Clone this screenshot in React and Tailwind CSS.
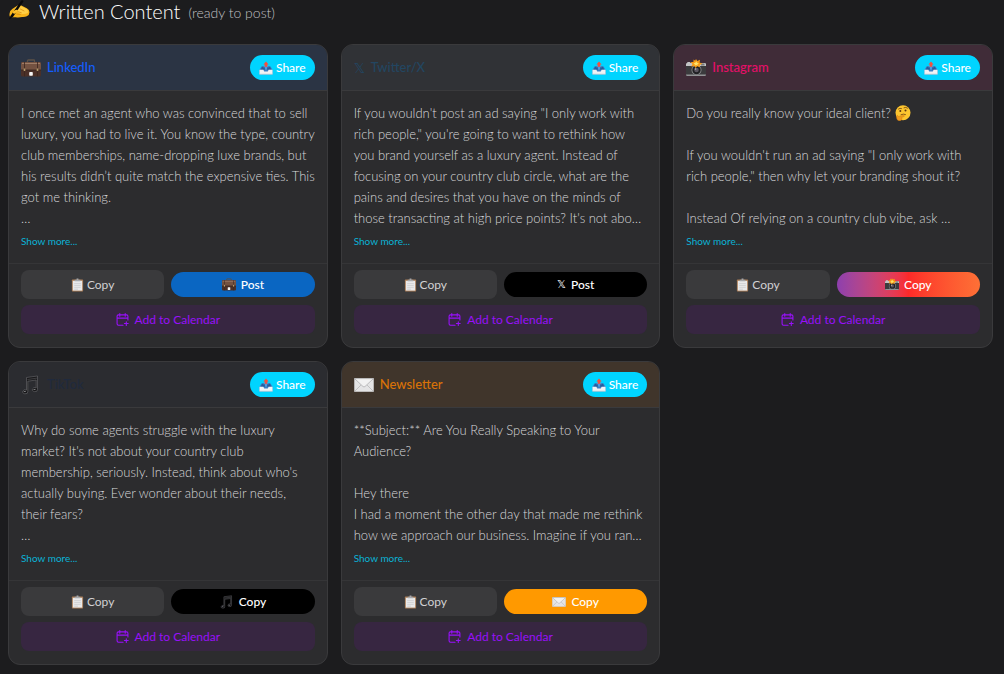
import { useState } from 'react';
import clsx from 'clsx';

function WritingHand({ className }) {
  return (
    <svg viewBox="0 0 24 22" className={className} aria-hidden="true">
      <path d="M1 15q0-3 3-5l5-3.500q3-1.500 5-.5l6 3q3 1.500 3 4.500t-3 4.500q-2 1-5 .8-4 .7-7 .2H3q-2.500-.5-2-4z" fill="#f9b51b" />
      <path d="M7 8.500l5-2q2 0 3 1l5 2.500q2 2 1.500 4-4 2-8 1l-5-2z" fill="#ffce45" />
      <path d="M9 12.500l5 1.500M9 15.500l4 .5M13 10l4 2" stroke="#d98b10" strokeWidth=".8" strokeLinecap="round" />
      <path d="M.500 21.500l1.500-4L14 .5q1.500-.8 2.500.8L5 18.500z" fill="#09090b" />
      <path d="M5 12.500q3-2.500 5-1.500 1 1.500-1 2.500l-3 2q-2-1-1-3z" fill="#ffc02b" />
    </svg>
  );
}

function Briefcase({ className }) {
  return (
    <svg viewBox="0 0 20 18" className={className} aria-hidden="true">
      <path d="M6.500 4V1.800q0-.8.8-.8h5.400q.8 0 .8.800V4" fill="none" stroke="#5d5147" strokeWidth="1.300" />
      <rect y="3" width="20" height="14.500" rx="1.500" fill="#4b3028" />
      <path d="M1.500 3h17Q20 3 20 4.500V11H0V4.500Q0 3 1.500 3z" fill="#745241" />
      <path d="M1 4.500h18" stroke="#a07d66" strokeWidth="1" />
      <path d="M0 11h20" stroke="#33211b" strokeWidth=".8" />
      <path d="M3.500 3v14.500M16.500 3v14.500" stroke="#3a261e" strokeWidth=".8" />
      <rect x="2.700" y="9.500" width="1.600" height="2.500" fill="#b59b6d" />
      <rect x="15.700" y="9.500" width="1.600" height="2.500" fill="#b59b6d" />
      <rect x="8.200" y="13" width="3.600" height="3.800" rx=".8" fill="#f5f5f5" />
    </svg>
  );
}

function Outbox({ className }) {
  return (
    <svg viewBox="0 0 16 16" className={className} aria-hidden="true">
      <path d="M3 6h10l2.500 4v5H.5v-5z" fill="#3b7fc4" />
      <path d="M3.500 6.500h9l1.500 3.500H2z" fill="#255d9d" />
      <path d="M.5 10H5l1 2h4l1-2h4.500v5H.5z" fill="#f1f3f5" />
      <path d="M.5 14.500h15v1H.5z" fill="#c3cad1" />
      <path d="M6.700 10V7H4.500L8 4l3.500 3H9.300v3z" fill="#4d9ae0" />
      <path d="M8 .5L11 4H9.500v2.500h-3V4H5z" fill="#f4503f" />
    </svg>
  );
}

function Camera({ className }) {
  return (
    <svg viewBox="0 0 20 18" className={className} aria-hidden="true">
      <rect y="4" width="20" height="13" rx="1.300" fill="#3b3b3d" />
      <path d="M0 5.300Q0 4 1.300 4V3h3v1h14.400Q20 4 20 5.300V7H0z" fill="#c3c4c5" />
      <rect x="15" y="4.500" width="3.500" height="2" fill="#77787a" />
      <path d="M0 15.500h20q0 1.500-1.300 1.500H1.300Q0 17 0 15.500z" fill="#929395" />
      <circle cx="10.500" cy="11" r="5" fill="#8a8b8d" />
      <circle cx="10.500" cy="11" r="4.200" fill="#202023" />
      <circle cx="10.500" cy="11" r="2.300" fill="#5b5660" />
      <circle cx="9.500" cy="10" r=".8" fill="#bdbdc4" />
      <path d="M10 0l1.300 2L14 .8l-.4 2.600 2.900 1.300-2.800 1.200.2 2.400-2.700-1.100L9.500 9 8.200 7l-3 .5 1.300-2.400-2-2 2.900-.2L7.600.6l1.500 1.200z" fill="#f89b16" />
      <path d="M10.300 2.300l.8 1.500 1.900.5-1.500 1 .1 1.500-1.500-.7-1.500.6.2-1.500-1.300-1 1.800-.4z" fill="#ffe36a" />
    </svg>
  );
}

function MusicNotes({ className }) {
  return (
    <svg viewBox="0 0 20 20" className={className} aria-hidden="true">
      <path d="M5.500 2.500L16.500 1v13.500a2.600 2 0 1 1-1.300-1.600V5L6.800 6.200v10.500a2.600 2 0 1 1-1.300-1.600z" fill="#18181a" stroke="#6b6b6e" strokeWidth=".6" />
      <path d="M6.500 4.500l9.500-1.400" stroke="#59595c" strokeWidth=".6" />
      <ellipse cx="3.800" cy="16.500" rx="1.200" ry=".6" fill="#858588" />
      <ellipse cx="13.500" cy="14.500" rx="1.200" ry=".6" fill="#858588" />
    </svg>
  );
}

function Envelope({ className }) {
  return (
    <svg viewBox="0 0 20 14" className={className} aria-hidden="true">
      <rect x=".3" y=".3" width="19.400" height="13.400" rx=".6" fill="#e4e4e5" stroke="#bcbcbe" strokeWidth=".6" />
      <path d="M.6 13.400L7.500 6.500M19.400 13.400l-6.900-6.900" stroke="#b1b1b3" strokeWidth=".7" />
      <path d="M.6.600L9 8.500q1 .8 2 0L19.400.6z" fill="#f2f2f2" stroke="#a9a9ab" strokeWidth=".7" />
    </svg>
  );
}

function Clipboard({ className }) {
  return (
    <svg viewBox="0 0 13 15" className={className} aria-hidden="true">
      <rect x=".5" y="1.500" width="12" height="13" rx=".8" fill="#a97c57" />
      <rect x="1.500" y="3" width="10" height="10.500" fill="#e9e9ea" />
      <path d="M3 6h7M3 8h7M3 10h7M3 12h4" stroke="#bfc0c4" strokeWidth=".6" />
      <path d="M3.500 3.500V2h2V.5h2V2h2v1.500z" fill="#a5a7ab" />
    </svg>
  );
}

function Thinking({ className }) {
  return (
    <svg viewBox="0 0 16 16" className={className} aria-hidden="true">
      <circle cx="8" cy="7.700" r="7.500" fill="#fdc52f" />
      <circle cx="5.300" cy="6" r="1" fill="#5a3511" />
      <circle cx="10.500" cy="5.500" r="1" fill="#5a3511" />
      <path d="M3.500 4q1.500-1.200 3-.5M9 2.700q1.800-1 3.500.4M6 9.700q2.500-1.200 4.500-.2" fill="none" stroke="#6b3f12" strokeWidth=".8" strokeLinecap="round" />
      <path d="M1.500 11q1-1.500 2 .5l5-1.200q1.200 0 .7 1.200l-2.400.8q1.200 2.700-1.800 3.400Q1.200 16 1.500 11z" fill="#f09a1d" stroke="#c97812" strokeWidth=".4" />
    </svg>
  );
}

function CalendarAdd({ className }) {
  return (
    <svg viewBox="0 0 24 24" className={className} fill="none" stroke="currentColor" strokeWidth="2" strokeLinecap="round" strokeLinejoin="round" aria-hidden="true">
      <path d="M7 1v5M17 1v5M2 9.500h20M22 13V6q0-2.500-2.500-2.500h-15Q2 3.500 2 6v14q0 2.500 2.500 2.500H13M19 16v7M15.500 19.500h7" />
    </svg>
  );
}

const posts = [
  {
    name: 'LinkedIn',
    icon: <Briefcase className="h-[18px] w-5" />,
    header: 'bg-[#2b3444]',
    title: 'text-[#155dfc]',
    text: `I once met an agent who was convinced that to sell
luxury, you had to live it. You know the type, country
club memberships, name-dropping luxe brands, but
his results didn’t quite match the expensive ties. This
got me thinking.
…`,
    action: 'Post',
    actionIcon: <Briefcase className="h-[13px] w-[14px]" />,
    actionClass: 'bg-[#0a66c2]',
  },
  {
    name: 'Twitter/X',
    icon: <span className="w-[11px] font-['DejaVu_Sans'] text-sm text-[#234661]">𝕏</span>,
    header: 'bg-[#303236]',
    title: 'text-[#234661]',
    text: `If you wouldn't post an ad saying "I only work with
rich people," you're going to want to rethink how
you brand yourself as a luxury agent. Instead of
focusing on your country club circle, what are the
pains and desires that you have on the minds of
those transacting at high price points? It's not abo…`,
    action: 'Post',
    actionIcon: <span className="font-['DejaVu_Sans'] text-[11px] leading-none">𝕏</span>,
    actionClass: 'bg-black',
  },
  {
    name: 'Instagram',
    icon: <Camera className="h-[18px] w-5" />,
    header: 'bg-[#402c38]',
    title: 'text-[#e60f68]',
    text: `Do you really know your ideal client? 🤔

If you wouldn't run an ad saying "I only work with
rich people," then why let your branding shout it?

Instead Of relying on a country club vibe, ask …`,
    action: 'Copy',
    actionIcon: <Camera className="h-[13px] w-[14px]" />,
    actionClass: 'bg-linear-to-r from-[#8e3fae] via-[#fd2929] to-[#fd7036]',
  },
  {
    name: 'TikTok',
    icon: <MusicNotes className="size-5" />,
    header: 'bg-[#2b2c30]',
    title: 'text-[#202a3d]',
    text: `Why do some agents struggle with the luxury
market? It's not about your country club
membership, seriously. Instead, think about who's
actually buying. Ever wonder about their needs,
their fears?
…`,
    action: 'Copy',
    actionIcon: <MusicNotes className="size-[14px]" />,
    actionClass: 'bg-black',
  },
  {
    name: 'Newsletter',
    icon: <Envelope className="h-[14px] w-5" />,
    header: 'bg-[#40352b]',
    title: 'text-[#d97207]',
    text: `**Subject:** Are You Really Speaking to Your
Audience?

Hey there
I had a moment the other day that made me rethink
how we approach our business. Imagine if you ran…`,
    action: 'Copy',
    actionIcon: <Envelope className="h-[10px] w-[14px]" />,
    actionClass: 'bg-[#ff9900]',
  },
];

function PostText({ text }) {
  const [before, after] = text.split('🤔');
  return (
    <p className="whitespace-pre text-[13px] leading-[21px] font-light text-[#d8d8da]">
      {before}
      {after !== undefined && <Thinking className="inline size-4 align-text-bottom" />}
      {after}
    </p>
  );
}

function PostCard({ post }) {
  const [copied, setCopied] = useState(false);

  const copy = () => {
    navigator.clipboard?.writeText(post.text);
    setCopied(true);
    setTimeout(() => setCopied(false), 1500);
  };

  return (
    <article className="min-w-0 overflow-hidden rounded-xl border border-[#3a3a3c] bg-[#2c2c2e]">
      <header className={clsx('flex items-center justify-between border-b border-[#3a3a3c] px-3 py-[10px]', post.header)}>
        <h3 className={clsx('flex items-center gap-[6px] text-[13px] font-medium', post.title)}>
          {post.icon}
          {post.name}
        </h3>
        <button className="flex h-[25px] items-center gap-[3px] rounded-full bg-[#00d4ff] px-[9px] text-xs font-medium text-white">
          <Outbox className="size-[14px]" />
          Share
        </button>
      </header>

      <div className="px-3 pt-3 pb-[14px]">
        <PostText text={post.text} />
        <button className="mt-1 block text-[10px] leading-4 text-[#0ab3d6]">Show more...</button>
      </div>

      <div className="border-t border-[#353537] px-3 pt-[6px] pb-[13px]">
        <div className="grid grid-cols-2 items-center gap-[7px]">
          <button
            onClick={copy}
            className="flex h-[29px] items-center justify-center gap-[3px] rounded-lg bg-[#3a3a3c] text-xs text-[#d1d1d3]"
          >
            <Clipboard className="h-[14px] w-[13px]" />
            {copied ? 'Copied' : 'Copy'}
          </button>
          <button className={clsx('flex h-[25px] items-center justify-center gap-[5px] rounded-full text-xs font-medium text-white', post.actionClass)}>
            {post.actionIcon}
            {post.action}
          </button>
        </div>
        <button className="mt-[6px] flex h-[29px] w-full items-center justify-center gap-[6px] rounded-lg bg-[#372641] text-xs text-[#9810fa]">
          <CalendarAdd className="size-[13px]" />
          Add to Calendar
        </button>
      </div>
    </article>
  );
}

export default function App() {
  return (
    <main className="min-h-screen bg-[#1c1c1e] pr-[11px] pb-2 pl-2 font-['Lato',sans-serif]">
      <h2 className="flex h-11 items-start gap-2 text-xl leading-[22px] font-light text-white">
        <WritingHand className="h-[20px] w-[23px]" />
        <span>Written Content</span>
        <span className="text-sm leading-[26px] text-[#c0c0c3]">(ready to post)</span>
      </h2>
      <div className="grid grid-cols-3 gap-[13px]">
        {posts.map((post) => (
          <PostCard key={post.name} post={post} />
        ))}
      </div>
    </main>
  );
}
